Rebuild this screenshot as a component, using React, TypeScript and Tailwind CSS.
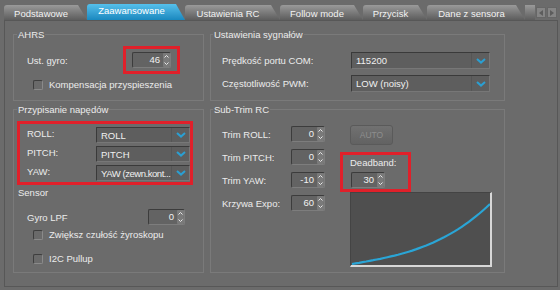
import React from 'react';

const tabs = [
  { label: 'Podstawowe', w: 'w-[83px]', active: false },
  { label: 'Zaawansowane', w: 'w-[98px]', active: true },
  { label: 'Ustawienia RC', w: 'w-[95px]', active: false },
  { label: 'Follow mode', w: 'w-[83px]', active: false },
  { label: 'Przycisk', w: 'w-[64px]', active: false },
  { label: 'Dane z sensora', w: 'w-[98px]', active: false },
];

const trims = [
  { label: 'Trim ROLL:', value: '0' },
  { label: 'Trim PITCH:', value: '0' },
  { label: 'Trim YAW:', value: '-10' },
  { label: 'Krzywa Expo:', value: '60' },
];

function SpinArrow({ up }: { up?: boolean }) {
  return (
    <div className="flex h-[7px] w-[7px] items-center justify-center rounded-[1px] bg-[#7a7a7a]">
      <svg width="5" height="3" viewBox="0 0 5 3">
        <path d={up ? 'M0.5 2.5 L2.5 0.5 L4.5 2.5' : 'M0.5 0.5 L2.5 2.5 L4.5 0.5'} stroke="#e8e8e8" strokeWidth="1" fill="none" />
      </svg>
    </div>
  );
}

function SpinBox({ value, className }: { value: string; className: string }) {
  return (
    <div className={`flex h-[16px] items-stretch rounded-[2px] border border-[#3c3c3c] border-r-[#7d7d7d] border-b-[#7d7d7d] bg-[#636363] ${className}`}>
      <span className="flex-1 pr-[2px] text-right leading-[14px] text-[#f2f2f2]">{value}</span>
      <div className="flex w-[8px] flex-col items-center justify-center">
        <SpinArrow up />
        <SpinArrow />
      </div>
    </div>
  );
}

function Select({ value, className, tight }: { value: string; className: string; tight?: boolean }) {
  return (
    <div className={`flex items-stretch rounded-[1px] border border-[#3a3a3a] border-r-[#777] border-b-[#777] bg-[#5e5e5e] ${className}`}>
      <span className={`flex flex-1 items-center overflow-hidden whitespace-nowrap pl-[4px] text-[#f0f0f0] ${tight ? 'tracking-[-0.45px]' : ''}`}>{value}</span>
      <div className="flex w-[18px] shrink-0 items-center justify-center border-l border-[#555]">
        <svg width="10" height="6" viewBox="0 0 10 6">
          <path d="M1 1 L5 4.6 L9 1" stroke="#2a9fd2" strokeWidth="2" fill="none" />
        </svg>
      </div>
    </div>
  );
}

function Check({ label }: { label: string }) {
  return (
    <div className="flex items-center gap-[6px]">
      <div className="h-[10px] w-[10px] rounded-[2px] border border-[#3e3e3e] border-r-[#8a8a8a] border-b-[#8a8a8a] bg-[#6a6a6a]" />
      <span>{label}</span>
    </div>
  );
}

function ExpoChart() {
  const pts = Array.from({ length: 40 }, (_, i) => {
    const t = i / 39;
    const x = 1 + t * 138;
    const y = 71 - 60 * (0.4 * t + 0.6 * t * t * t);
    return `${x.toFixed(1)},${y.toFixed(1)}`;
  }).join(' ');
  return (
    <div className="ml-[10px] h-[75px] w-[142px] border border-[#444] border-r-2 border-b-2 border-r-[#d8d8d8] border-b-[#d8d8d8] bg-[#4f4f4f]">
      <svg width="139" height="72" viewBox="0 0 139 72">
        <polyline points={pts} stroke="#2aa5d6" strokeWidth="2.2" fill="none" />
      </svg>
    </div>
  );
}

export default function App() {
  return (
    <div className="h-[290px] w-[560px] overflow-hidden bg-[#6b6b6b] font-['Liberation_Sans',Arial,sans-serif] text-[9.5px] leading-[11px] text-[#ececec]">
      {/* Tabs */}
      <div className="flex h-[20px] items-end pl-[4px]">
        {tabs.map((t) => (
          <div
            key={t.label}
            className={`${t.w} ${
              t.active
                ? 'h-[16px] bg-linear-to-b from-[#55c0eb] to-[#1888bf] pb-[3px] text-white'
                : 'h-[15px] bg-linear-to-b from-[#9a9a9a] to-[#5d5d5d] pt-[1px] text-[#f2f2f2]'
            } flex items-center justify-center rounded-tl-[3px] pr-[9px] [clip-path:polygon(0_0,calc(100%_-_9px)_0,100%_100%,0_100%)]`}
          >
            {t.label}
          </div>
        ))}
        <div className="h-[15px] w-[10px] bg-linear-to-b from-[#9a9a9a] to-[#5d5d5d]" />
        <div className="mb-[2px] ml-[1px] flex h-[11px] gap-[1px]">
          <div className="flex w-[10px] items-center justify-center border border-[#666] bg-[#858585]">
            <svg width="4" height="6" viewBox="0 0 4 6"><path d="M4 0 L0 3 L4 6 Z" fill="#5c5c5c" /></svg>
          </div>
          <div className="flex w-[10px] items-center justify-center border border-[#666] bg-[#858585]">
            <svg width="4" height="6" viewBox="0 0 4 6"><path d="M0 0 L4 3 L0 6 Z" fill="#5c5c5c" /></svg>
          </div>
        </div>
      </div>

      {/* Panel */}
      <div className="ml-[4px] h-[267px] w-[554px] border border-[#575757]">
        <div className="flex gap-[6px] pl-[8px] pt-[8px]">
          {/* Left column */}
          <div className="flex w-[191px] flex-col gap-[3px]">
            <fieldset className="h-[72px] border border-[#7a7a7a]">
              <legend className="ml-[3px] px-[1px]">AHRS</legend>
              <div className="mt-[6px] flex items-start">
                <span className="w-[109px] pl-[13px] pt-[9px]">Ust. gyro:</span>
                <div className="flex h-[28px] w-[57px] items-center justify-center border-[3px] border-[#e0202a]">
                  <SpinBox value="46" className="w-[39px]" />
                </div>
              </div>
              <div className="ml-[19px] mt-[5px]">
                <Check label="Kompensacja przyspieszenia" />
              </div>
            </fieldset>

            <fieldset className="h-[169px] border border-[#7a7a7a]">
              <legend className="ml-[3px] px-[1px]">Przypisanie napędów</legend>
              <div className="ml-[3px] mt-[6px] flex w-[176px] flex-col gap-[3px] border-[3px] border-[#e0202a] pb-[1px] pt-[3px]">
                <div className="flex items-start">
                  <span className="w-[76px] pl-[7px] pt-[1px]">ROLL:</span>
                  <Select value="ROLL" className="h-[16px] w-[94px]" />
                </div>
                <div className="flex items-start">
                  <span className="w-[76px] pl-[7px] pt-[1px]">PITCH:</span>
                  <Select value="PITCH" className="h-[16px] w-[94px]" />
                </div>
                <div className="flex items-start">
                  <span className="w-[76px] pl-[7px] pt-[1px]">YAW:</span>
                  <Select value="YAW (zewn.kont..." className="h-[16px] w-[94px]" tight />
                </div>
              </div>
              <div className="mt-[2px] pl-[4px]">Sensor</div>
              <div className="mt-[11px] flex items-center">
                <span className="w-[134px] pl-[13px]">Gyro LPF</span>
                <SpinBox value="0" className="w-[37px]" />
              </div>
              <div className="ml-[19px] mt-[4px] flex flex-col gap-[13px]">
                <Check label="Zwiększ czułość żyroskopu" />
                <Check label="I2C Pullup" />
              </div>
            </fieldset>
          </div>

          {/* Right column */}
          <div className="flex w-[295px] flex-col gap-[3px]">
            <fieldset className="h-[72px] border border-[#7a7a7a]">
              <legend className="ml-[2px] px-[1px]">Ustawienia sygnałów</legend>
              <div className="mt-[12px] flex flex-col gap-[6px]">
                <div className="flex items-center">
                  <span className="w-[140px] pl-[11px]">Prędkość portu COM:</span>
                  <Select value="115200" className="h-[17px] w-[139px]" />
                </div>
                <div className="flex items-center">
                  <span className="w-[140px] pl-[11px]">Częstotliwość PWM:</span>
                  <Select value="LOW (noisy)" className="h-[17px] w-[139px]" />
                </div>
              </div>
            </fieldset>

            <fieldset className="h-[169px] border border-[#7a7a7a]">
              <legend className="ml-[2px] px-[1px]">Sub-Trim RC</legend>
              <div className="flex">
                <div className="mt-[11px] flex w-[129px] flex-col gap-[7px]">
                  {trims.map((t) => (
                    <div key={t.label} className="flex items-center">
                      <span className="w-[80px] pl-[11px]">{t.label}</span>
                      <SpinBox value={t.value} className="w-[34px]" />
                    </div>
                  ))}
                </div>
                <div className="flex flex-col">
                  <div className="ml-[10px] mt-[10px] flex h-[20px] w-[43px] items-center justify-center rounded-[3px] border border-[#5a5a5a] bg-linear-to-b from-[#717171] to-[#626262] text-[8.5px] text-[#8e8e8e]">
                    AUTO
                  </div>
                  <div className="mt-[7px] flex h-[40px] w-[71px] flex-col border-[3px] border-[#e0202a] pl-[7px] pt-[2px]">
                    <span>Deadband:</span>
                    <SpinBox value="30" className="ml-[1px] mt-[4px] w-[34px]" />
                  </div>
                  <ExpoChart />
                </div>
              </div>
            </fieldset>
          </div>
        </div>
      </div>
    </div>
  );
}
